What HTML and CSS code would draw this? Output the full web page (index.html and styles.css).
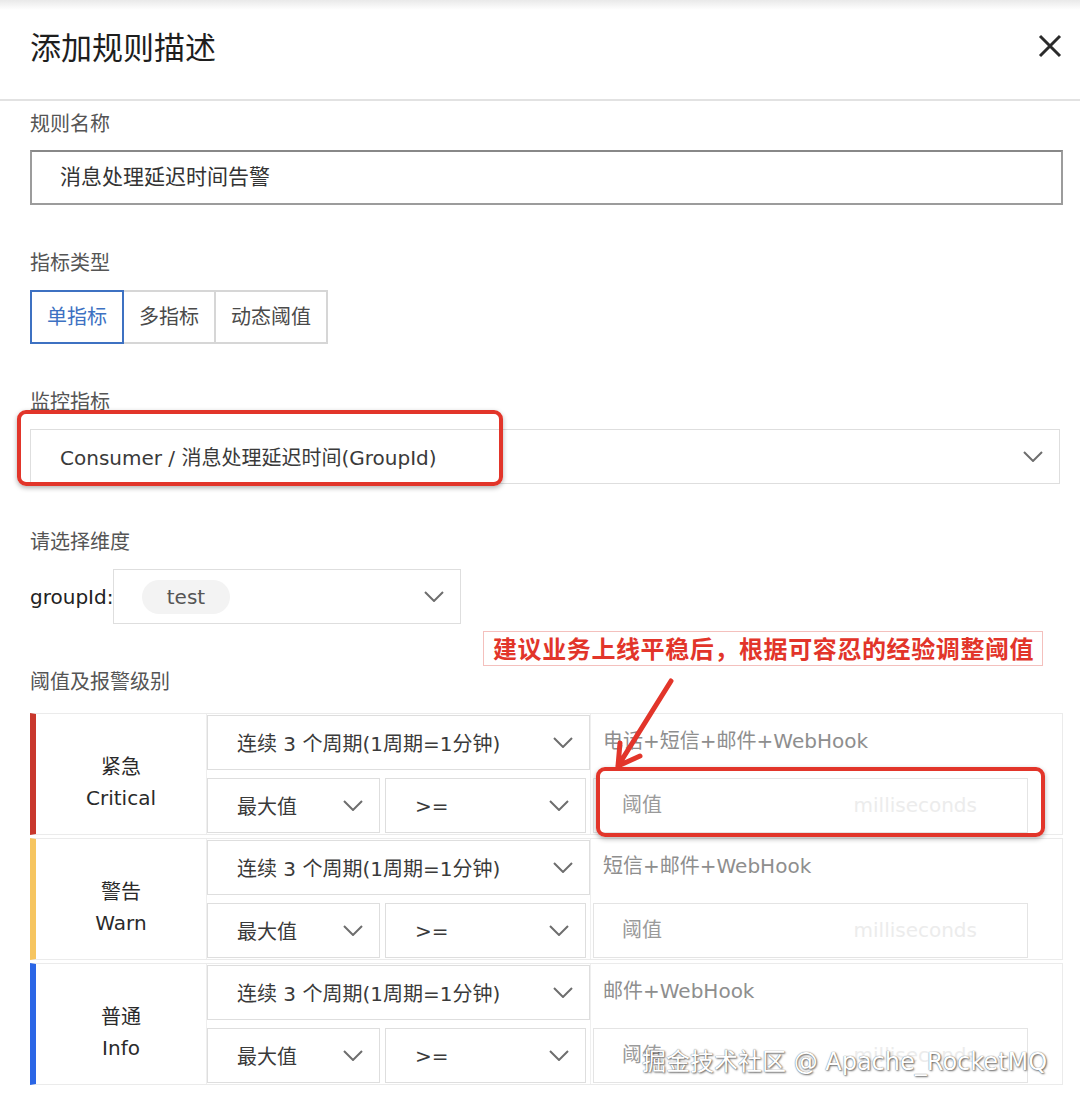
FILE: index.html
```html
<!DOCTYPE html>
<html>
<head>
    <meta charset="utf-8">
    <title>添加规则描述</title>
    <link rel="stylesheet" href="styles.css">
</head>
<body>
<div class="page">
    <header class="dialog-head">
        <h2>添加规则描述</h2>
        <span class="close">
            <svg width="24" height="24" viewBox="0 0 24 24"><path d="M2 2 L22 22 M22 2 L2 22" stroke="#2b2b2b" stroke-width="3" fill="none"/></svg>
        </span>
    </header>

    <div class="dialog-body">
        <div class="field">
            <div class="label first">规则名称</div>
            <div class="name-input">消息处理延迟时间告警</div>
        </div>

        <div class="field">
            <div class="label">指标类型</div>
            <div class="btn-group">
                <span class="btn active">单指标</span>
                <span class="btn">多指标</span>
                <span class="btn">动态阈值</span>
            </div>
        </div>

        <div class="field">
            <div class="label">监控指标</div>
            <div class="select metric">
                <span>Consumer / 消息处理延迟时间(GroupId)</span>
                <svg class="chev" width="20" height="11" viewBox="0 0 20 11"><polyline points="1,1 10,10 19,1"/></svg>
            </div>
        </div>

        <div class="field">
            <div class="label">请选择维度</div>
            <div class="dim-row">
                <span class="dim-name">groupId:</span>
                <div class="select dim">
                    <span class="tag">test</span>
                    <svg class="chev" width="20" height="11" viewBox="0 0 20 11"><polyline points="1,1 10,10 19,1"/></svg>
                </div>
            </div>
        </div>

        <div class="field">
            <div class="label last">阈值及报警级别</div>
            <div class="levels" id="levels"></div>
        </div>
    </div>

    <!-- annotations drawn over the screenshot -->
    <div class="mark mark-metric"></div>
    <div class="mark mark-threshold"></div>
    <div class="note">建议业务上线平稳后，根据可容忍的经验调整阈值</div>
    <svg class="arrow" width="1080" height="1106" viewBox="0 0 1080 1106">
        <path d="M671 681 L618 766 M618 766 L620 743 M618 766 L640 756" stroke="#e2352a" stroke-width="5" stroke-linecap="round" fill="none"/>
    </svg>
    <div class="watermark">掘金技术社区 @ Apache_RocketMQ</div>
</div>

<script>
    var levels = [
        { cls: 'critical', cn: '紧急', en: 'Critical', notify: '电话+短信+邮件+WebHook' },
        { cls: 'warn', cn: '警告', en: 'Warn', notify: '短信+邮件+WebHook' },
        { cls: 'info', cn: '普通', en: 'Info', notify: '邮件+WebHook' }
    ];

    var chev = '<svg class="chev" width="20" height="11" viewBox="0 0 20 11"><polyline points="1,1 10,10 19,1"/></svg>';

    var container = document.getElementById('levels');
    levels.forEach(function(level) {
        var row = document.createElement('div');
        row.className = 'level ' + level.cls;
        row.innerHTML = `
            <div class="level-name">${level.cn}<br>${level.en}</div>
            <div class="level-rules">
                <div class="select period"><span>连续 3 个周期(1周期=1分钟)</span>${chev}</div>
                <div class="rule-line">
                    <div class="select stat"><span>最大值</span>${chev}</div>
                    <div class="select op"><span>&gt;=</span>${chev}</div>
                </div>
            </div>
            <div class="level-notify">
                <div class="notify">${level.notify}</div>
                <div class="threshold"><span>阈值</span><span class="unit">milliseconds</span></div>
            </div>
        `;
        container.appendChild(row);
    });
</script>
</body>
</html>
```

FILE: styles.css
```css
body {
    margin: 0;
    background-color: #fff;
    font-family: "DejaVu Sans", "Noto Sans CJK SC", sans-serif;
    color: #333;
}

.page {
    position: relative;
    width: 1080px;
    height: 1106px;
    overflow: hidden;
    background-color: #fff;
}

.dialog-head {
    display: flex;
    align-items: center;
    justify-content: space-between;
    height: 101px;
    padding: 0 18px 7px 30px;
    box-sizing: border-box;
    background: linear-gradient(#e9e9e9 0px, #fff 10px);
    border-bottom: 2px solid #e2e2e2;
}

.dialog-head h2 {
    margin: 0;
    font-family: "Noto Sans CJK SC", sans-serif;
    font-size: 31px;
    font-weight: 400;
    color: #1e1e1e;
    line-height: 40px;
}

.close {
    display: flex;
}

.dialog-body {
    padding: 9px 17px 0 30px;
}

.field {
    margin-bottom: 44px;
}

.label {
    font-size: 20px;
    line-height: 28px;
    color: #555;
    margin-bottom: 13px;
}

.label.first {
    margin-bottom: 12px;
}

.label.last {
    margin-bottom: 17px;
}

.name-input {
    height: 55px;
    box-sizing: border-box;
    border: 2px solid #9c9c9c;
    border-top-color: #888;
    padding-left: 28px;
    font-size: 21px;
    line-height: 51px;
    color: #333;
}

.btn-group {
    display: flex;
}

.btn {
    height: 54px;
    box-sizing: border-box;
    padding: 0 15px;
    border: 2px solid #d6d6d6;
    font-size: 20px;
    line-height: 50px;
    color: #4a4a4a;
}

.btn + .btn {
    margin-left: -2px;
}

.btn.active {
    position: relative;
    z-index: 1;
    border-color: #3d71c2;
    color: #3d71c2;
}

.select {
    display: flex;
    align-items: center;
    justify-content: space-between;
    height: 55px;
    box-sizing: border-box;
    border: 1px solid #dedede;
    padding: 0 16px 0 29px;
    font-size: 20px;
    color: #3a3a3a;
    background-color: #fff;
}

.chev {
    flex: none;
}

.chev polyline {
    fill: none;
    stroke: #6e6e6e;
    stroke-width: 2;
}

.select.metric {
    margin-right: 3px;
}

.dim-row {
    display: flex;
    align-items: center;
}

.dim-name {
    font-size: 20px;
    color: #222;
    width: 83px;
}

.select.dim {
    width: 348px;
    padding-left: 28px;
}

.tag {
    display: inline-block;
    width: 88px;
    height: 34px;
    line-height: 34px;
    border-radius: 17px;
    background-color: #f3f3f3;
    text-align: center;
    color: #555;
}

/* threshold rows */
.level {
    display: flex;
    height: 122px;
    box-sizing: border-box;
    border: 1px solid #ebebeb;
    border-left: 6px solid #ccc;
}

.level + .level {
    margin-top: 3px;
}

.level.critical { border-left-color: #c9382d; }
.level.warn { border-left-color: #f6c560; }
.level.info { border-left-color: #2b66e6; }

.level-name {
    width: 171px;
    flex: none;
    display: flex;
    flex-direction: column;
    justify-content: center;
    box-sizing: border-box;
    padding-top: 18px;
    border-right: 1px solid #efefef;
    text-align: center;
    font-size: 20px;
    line-height: 31px;
    color: #2a2a2a;
}

.level-rules {
    width: 383px;
    flex: none;
    display: flex;
    flex-direction: column;
    gap: 8px;
    padding: 1px 0;
}

.rule-line {
    display: flex;
    gap: 5px;
}

.select.stat {
    width: 173px;
}

.select.op {
    width: 201px;
}

.level-notify {
    flex: 1;
    display: flex;
    flex-direction: column;
    gap: 8px;
    padding: 1px 34px 1px 2px;
    border-left: 1px solid #efefef;
}

.notify {
    height: 55px;
    line-height: 52px;
    padding-left: 10px;
    font-size: 20px;
    color: #8e8e8e;
}

.threshold {
    display: flex;
    justify-content: space-between;
    height: 55px;
    box-sizing: border-box;
    border: 1px solid #e4e4e4;
    padding: 0 50px 0 28px;
    font-size: 20px;
    line-height: 53px;
    color: #9a9a9a;
}

.unit {
    color: #ececec;
}

/* annotations */
.mark {
    position: absolute;
    box-sizing: border-box;
    border: 4px solid #e2352a;
    border-radius: 9px;
    box-shadow: 0 2px 5px rgba(0, 0, 0, 0.3);
}

.mark-metric {
    left: 17px;
    top: 410px;
    width: 486px;
    height: 76px;
}

.mark-threshold {
    left: 596px;
    top: 767px;
    width: 449px;
    height: 70px;
}

.note {
    position: absolute;
    left: 483px;
    top: 631px;
    width: 560px;
    height: 35px;
    box-sizing: border-box;
    border: 1px solid #f4c0bd;
    background-color: #fff;
    padding-left: 9px;
    font-family: "Noto Sans CJK SC", sans-serif;
    font-size: 24px;
    font-weight: 700;
    letter-spacing: 0.6px;
    line-height: 32px;
    color: #e2352a;
    white-space: nowrap;
}

.arrow {
    position: absolute;
    left: 0;
    top: 0;
    pointer-events: none;
}

.watermark {
    position: absolute;
    left: 642px;
    top: 1046px;
    font-size: 24px;
    line-height: 32px;
    color: #fff;
    white-space: nowrap;
    text-shadow: 0 0 1px #555, 1px 1px 2px rgba(0, 0, 0, 0.6);
}
```
